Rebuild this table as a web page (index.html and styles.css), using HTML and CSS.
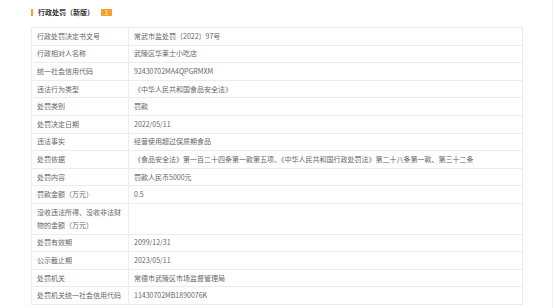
FILE: index.html
```html
<!DOCTYPE html>
<html lang="zh">
<head>
<meta charset="utf-8">
<link rel="stylesheet" href="styles.css">
</head>
<body>
<div class="page">
  <div class="head">
    <span class="bar"></span>
    <span class="title">行政处罚（新版）</span>
    <span class="badge">1</span>
  </div>
  <div class="grid">
    <div class="k">行政处罚决定书文号</div><div class="v">常武市监处罚〔2022〕97号</div>
    <div class="k">行政相对人名称</div><div class="v">武陵区华莱士小吃店</div>
    <div class="k">统一社会信用代码</div><div class="v">92430702MA4QPGRMXM</div>
    <div class="k">违法行为类型</div><div class="v">《中华人民共和国食品安全法》</div>
    <div class="k">处罚类别</div><div class="v">罚款</div>
    <div class="k">处罚决定日期</div><div class="v">2022/05/11</div>
    <div class="k">违法事实</div><div class="v">经营使用超过保质期食品</div>
    <div class="k">处罚依据</div><div class="v">《食品安全法》第一百二十四条第一款第五项、《中华人民共和国行政处罚法》第二十八条第一款、第三十二条</div>
    <div class="k">处罚内容</div><div class="v">罚款人民币5000元</div>
    <div class="k">罚款金额（万元）</div><div class="v">0.5</div>
    <div class="k">没收违法所得、没收非法财物的金额（万元）</div><div class="v"></div>
    <div class="k">处罚有效期</div><div class="v">2099/12/31</div>
    <div class="k">公示截止期</div><div class="v">2023/05/11</div>
    <div class="k">处罚机关</div><div class="v">常德市武陵区市场监督管理局</div>
    <div class="k">处罚机关统一社会信用代码</div><div class="v">11430702MB1890076K</div>
  </div>
</div>
</body>
</html>
```
FILE: styles.css
```css
html, body {
  margin: 0;
  padding: 0;
  background: #fff;
}
.page {
  box-sizing: border-box;
  width: 553px;
  height: 308px;
  border-right: 1px solid #eeeeee;
  padding: 9px 0 0 31px;
  font-family: "Noto Sans CJK SC", "Microsoft YaHei", sans-serif;
  font-size: 7px;
  color: #666;
}
.head {
  display: flex;
  align-items: center;
  height: 7px;
  margin-bottom: 11px;
}
.bar {
  width: 2px;
  height: 7px;
  background: #f5a031;
  margin-right: 5px;
}
.title {
  font-weight: bold;
  color: #333;
  line-height: 7px;
  margin-right: 7px;
}
.badge {
  width: 11px;
  height: 7px;
  background: #f5a031;
  color: #fff;
  font-size: 6px;
  line-height: 7px;
  text-align: center;
}
.grid {
  display: grid;
  grid-template-columns: 97px 1fr;
  width: 492px;
  box-sizing: border-box;
  border: 1px solid #ececec;
  border-bottom: none;
}
.k, .v {
  border-bottom: 1px solid #ececec;
  padding: 1.8px 5px;
  line-height: 13px;
}
.k {
  border-right: 1px solid #ececec;
}
```
